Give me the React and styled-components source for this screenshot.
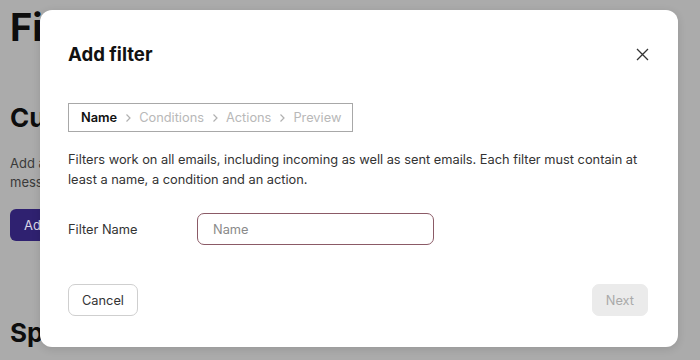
import React from "react";
import styled, { createGlobalStyle } from "styled-components";

const GlobalStyle = createGlobalStyle`
  html, body { margin: 0; padding: 0; }
  body {
    font-family: Inter, "Noto Sans", "Liberation Sans", sans-serif;
    background: #ababab;
    width: 700px;
    height: 360px;
    overflow: hidden;
  }
`;

const Page = styled.div`
  position: relative;
  width: 700px;
  height: 360px;
  padding: 4px 10px;
  box-sizing: border-box;
  color: #0d0d0d;
`;

const PageTitle = styled.h1`
  margin: 0;
  font-size: 38px;
  font-weight: 700;
  line-height: 46px;
`;

const SectionTitle = styled.h2`
  margin: ${(p) => p.$top}px 0 0;
  font-size: 26px;
  font-weight: 700;
  line-height: 32px;
`;

const SectionText = styled.p`
  margin: 20px 0 0;
  font-size: 13px;
  line-height: 19px;
  color: #3a3a3a;
`;

const PrimaryButton = styled.div`
  margin-top: 17px;
  width: 80px;
  height: 32px;
  border-radius: 6px;
  background: #2f2170;
  color: #d8d6e6;
  font-size: 13px;
  line-height: 32px;
  padding-left: 14px;
  box-sizing: border-box;
`;

const Modal = styled.div`
  position: absolute;
  left: 40px;
  top: 10px;
  width: 638px;
  height: 337px;
  background: #fff;
  border-radius: 12px;
  box-sizing: border-box;
  padding: 30px 28px 31px;
  display: flex;
  flex-direction: column;
  box-shadow: 0 2px 8px rgba(0, 0, 0, 0.12);
`;

const Header = styled.div`
  display: flex;
  align-items: center;
  justify-content: space-between;
  height: 28px;
`;

const ModalTitle = styled.h3`
  margin: 0;
  font-size: 18.6px;
  font-weight: 700;
  color: #111;
`;

const CloseButton = styled.button`
  border: none;
  background: none;
  padding: 0;
  margin-right: -2px;
  width: 20px;
  height: 20px;
  display: flex;
  align-items: center;
  justify-content: center;
  color: #333;
`;

const Stepper = styled.div`
  margin-top: 35px;
  align-self: flex-start;
  display: flex;
  align-items: center;
  gap: 7px;
  height: 29px;
  padding: 0 11px 0 12px;
  border: 1px solid #a8a8a8;
  box-sizing: border-box;
  font-size: 12.8px;
`;

const Step = styled.span`
  color: ${(p) => (p.$active ? "#111" : "#b8b8b8")};
  font-weight: ${(p) => (p.$active ? 600 : 400)};
`;

const Chevron = styled.span`
  display: flex;
  color: #b0b0b0;
`;

const Description = styled.p`
  margin: 18px 0 0;
  font-size: 12.8px;
  line-height: 20px;
  color: #333;
`;

const FieldRow = styled.div`
  margin-top: 23px;
  display: flex;
  align-items: center;
`;

const Label = styled.label`
  width: 129px;
  font-size: 12.8px;
  color: #333;
`;

const Input = styled.input`
  width: 237px;
  height: 32px;
  box-sizing: border-box;
  border: 1px solid #8b5a66;
  border-radius: 7px;
  padding: 0 15px;
  font-family: inherit;
  font-size: 12.8px;
  color: #333;
  outline: none;
  &::placeholder { color: #8a8a8a; }
`;

const Footer = styled.div`
  margin-top: auto;
  display: flex;
  justify-content: space-between;
`;

const Button = styled.button`
  height: 32px;
  padding: 0 ${(p) => (p.$disabled ? 13 : 13)}px;
  border-radius: 7px;
  font-family: inherit;
  font-size: 12.8px;
  border: 1px solid ${(p) => (p.$disabled ? "#ebebeb" : "#cfcfcf")};
  background: ${(p) => (p.$disabled ? "#ebebeb" : "#fff")};
  color: ${(p) => (p.$disabled ? "#a9a9a9" : "#333")};
  margin-right: ${(p) => (p.$disabled ? 2 : 0)}px;
`;

const ChevronIcon = () => (
  <svg width="8" height="10" viewBox="0 0 8 10" fill="none">
    <path d="M2.5 1.5 L6 5 L2.5 8.5" stroke="currentColor" strokeWidth="1.2" />
  </svg>
);

const steps = ["Name", "Conditions", "Actions", "Preview"];

export default function App() {
  return (
    <>
      <GlobalStyle />
      <Page>
        <PageTitle>Filters</PageTitle>
        <SectionTitle $top={52}>Custom filters</SectionTitle>
        <SectionText>
          Add a custom filter
          <br />
          messages
        </SectionText>
        <PrimaryButton>Add</PrimaryButton>
        <SectionTitle $top={76}>Spam</SectionTitle>

        <Modal>
          <Header>
            <ModalTitle>Add filter</ModalTitle>
            <CloseButton aria-label="Close">
              <svg width="13" height="13" viewBox="0 0 13 13">
                <path d="M1 1 L12 12 M12 1 L1 12" stroke="currentColor" strokeWidth="1.3" />
              </svg>
            </CloseButton>
          </Header>
          <Stepper>
            {steps.map((s, i) => (
              <React.Fragment key={s}>
                {i > 0 && (
                  <Chevron>
                    <ChevronIcon />
                  </Chevron>
                )}
                <Step $active={i === 0}>{s}</Step>
              </React.Fragment>
            ))}
          </Stepper>
          <Description>
            Filters work on all emails, including incoming as well as sent emails. Each filter must contain at
            least a name, a condition and an action.
          </Description>
          <FieldRow>
            <Label>Filter Name</Label>
            <Input placeholder="Name" />
          </FieldRow>
          <Footer>
            <Button>Cancel</Button>
            <Button $disabled>Next</Button>
          </Footer>
        </Modal>
      </Page>
    </>
  );
}
